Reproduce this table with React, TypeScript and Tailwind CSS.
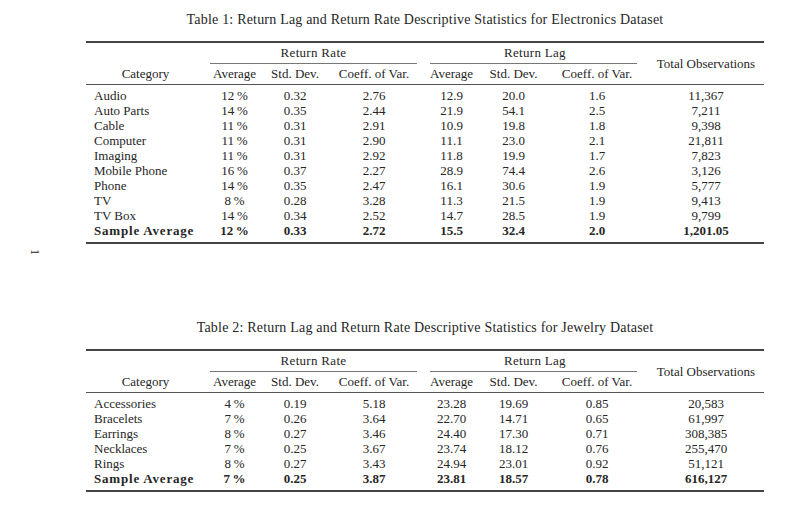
import React from 'react';

type Row = { name: string; cells: string[]; bold?: boolean };

const electronics: Row[] = [
  { name: 'Audio', cells: ['12\u2009%', '0.32', '2.76', '12.9', '20.0', '1.6', '11,367'] },
  { name: 'Auto Parts', cells: ['14\u2009%', '0.35', '2.44', '21.9', '54.1', '2.5', '7,211'] },
  { name: 'Cable', cells: ['11\u2009%', '0.31', '2.91', '10.9', '19.8', '1.8', '9,398'] },
  { name: 'Computer', cells: ['11\u2009%', '0.31', '2.90', '11.1', '23.0', '2.1', '21,811'] },
  { name: 'Imaging', cells: ['11\u2009%', '0.31', '2.92', '11.8', '19.9', '1.7', '7,823'] },
  { name: 'Mobile Phone', cells: ['16\u2009%', '0.37', '2.27', '28.9', '74.4', '2.6', '3,126'] },
  { name: 'Phone', cells: ['14\u2009%', '0.35', '2.47', '16.1', '30.6', '1.9', '5,777'] },
  { name: 'TV', cells: ['8\u2009%', '0.28', '3.28', '11.3', '21.5', '1.9', '9,413'] },
  { name: 'TV Box', cells: ['14\u2009%', '0.34', '2.52', '14.7', '28.5', '1.9', '9,799'] },
  { name: 'Sample Average', cells: ['12\u2009%', '0.33', '2.72', '15.5', '32.4', '2.0', '1,201.05'], bold: true },
];

const jewelry: Row[] = [
  { name: 'Accessories', cells: ['4\u2009%', '0.19', '5.18', '23.28', '19.69', '0.85', '20,583'] },
  { name: 'Bracelets', cells: ['7\u2009%', '0.26', '3.64', '22.70', '14.71', '0.65', '61,997'] },
  { name: 'Earrings', cells: ['8\u2009%', '0.27', '3.46', '24.40', '17.30', '0.71', '308,385'] },
  { name: 'Necklaces', cells: ['7\u2009%', '0.25', '3.67', '23.74', '18.12', '0.76', '255,470'] },
  { name: 'Rings', cells: ['8\u2009%', '0.27', '3.43', '24.94', '23.01', '0.92', '51,121'] },
  { name: 'Sample Average', cells: ['7\u2009%', '0.25', '3.87', '23.81', '18.57', '0.78', '616,127'], bold: true },
];

const cols = 'grid grid-cols-[119px_59px_62px_96px_59px_65px_102px_116px]';

const StatsTable = ({ caption, rows }: { caption: string; rows: Row[] }) => (
  <div className="flex flex-col">
    {/* Caption */}
    <div className="h-[16px] text-center text-[14px] leading-[16px] tracking-[0.2px] whitespace-nowrap">{caption}</div>
    <div className="mt-[13px] h-[2px] bg-[#444]" />

    {/* Header */}
    <div className={`${cols} grid-rows-[20px_1px_20px]`}>
      <div className="col-start-1 row-start-3 flex items-center justify-center">Category</div>
      <div className="col-start-2 col-span-3 row-start-1 flex items-center justify-center tracking-[0.3px]">Return Rate</div>
      <div className="col-start-2 col-span-3 row-start-2 ml-[5px] mr-[5px] bg-[#777]" />
      <div className="col-start-5 col-span-3 row-start-1 flex items-center justify-center tracking-[0.3px]">Return Lag</div>
      <div className="col-start-5 col-span-3 row-start-2 ml-[8px] mr-[11px] bg-[#777]" />
      <div className="col-start-8 row-start-1 row-span-3 flex items-center justify-center">Total Observations</div>
      {['Average', 'Std. Dev.', 'Coeff. of Var.', 'Average', 'Std. Dev.', 'Coeff. of Var.'].map((h, i) => (
        <div key={i} className="row-start-3 flex items-center justify-center whitespace-nowrap">
          {h}
        </div>
      ))}
    </div>
    <div className="h-[1px] bg-[#555]" />

    {/* Body */}
    <div className="pt-[3px] pb-[4px]">
      {rows.map(row => (
        <div key={row.name} className={`${cols} h-[15px] leading-[15px] ${row.bold ? 'font-bold' : ''}`}>
          <div className={`pl-[8px] whitespace-nowrap ${row.bold ? 'tracking-[0.8px]' : ''}`}>{row.name}</div>
          {row.cells.map((c, i) => (
            <div key={i} className="flex justify-center whitespace-nowrap">{c}</div>
          ))}
        </div>
      ))}
    </div>
    <div className="h-[2px] bg-[#444]" />
  </div>
);

const App = () => {
  return (
    <div className="relative w-[800px] h-[526px] overflow-hidden bg-white text-[13px] text-[#262626] font-['Liberation_Serif',serif]">
      {/* Page number, rotated for landscape page */}
      <div className="absolute left-[32px] top-[245px] rotate-90 text-[12px] leading-[14px]">1</div>

      <div className="ml-[86px] w-[678px] pt-[12px] flex flex-col">
        <StatsTable
          caption="Table 1: Return Lag and Return Rate Descriptive Statistics for Electronics Dataset"
          rows={electronics}
        />
        <div className="h-[76px]" />
        <StatsTable
          caption="Table 2: Return Lag and Return Rate Descriptive Statistics for Jewelry Dataset"
          rows={jewelry}
        />
      </div>
    </div>
  );
};

export default App;
